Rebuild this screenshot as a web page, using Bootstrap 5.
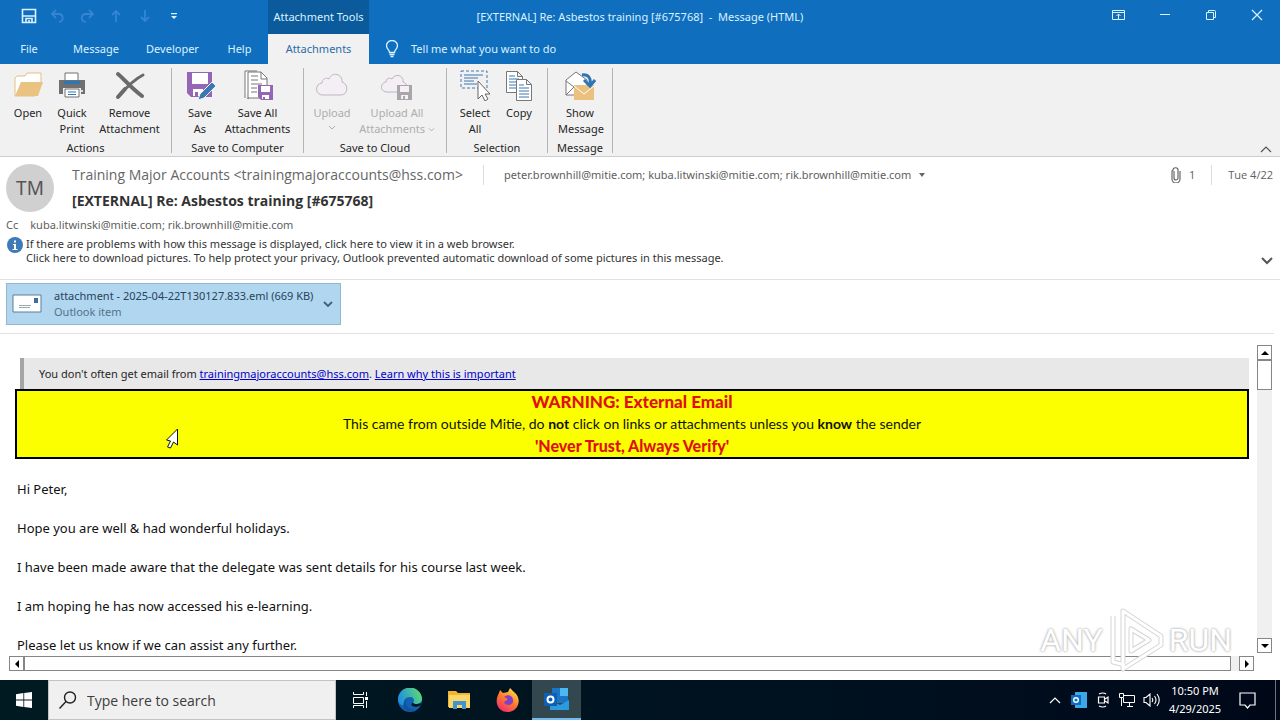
<!DOCTYPE html>
<html lang="en">
<head>
<meta charset="utf-8">
<meta name="viewport" content="width=device-width, initial-scale=1">
<title>[EXTERNAL] Re: Asbestos training [#675768] - Message (HTML)</title>
<link href="https://cdn.jsdelivr.net/npm/bootstrap@5.3.0/dist/css/bootstrap.min.css" rel="stylesheet">
<style>
:root { --ui: "Noto Sans", "Open Sans", sans-serif; --blue: #106ebe; }
body { font-family: var(--ui); font-size: 12px; line-height: 16px; color: #262626; background: #fff; }
button { font: inherit; color: inherit; background: none; border: 0; padding: 0; }
svg { display: block; flex: none; }
.f11 { font-size: 11px; }

.titlebar { height: 34px; background: var(--blue); color: #d9f3ff; }
.side { flex: 1 1 0; }
.window-title { white-space: pre; }
.qat { width: 268px; padding-left: 14px; }
.qat button { width: 29px; height: 32px; }
.qat button:disabled { color: #3585d2; }
.tools-head { width: 101px; background: #0b5a9c; }
.win-btn { width: 46px; height: 30px; }
.ribbon-tabs { background: var(--blue); color: #d9f3ff; display: grid; grid-template-columns: 58px 76px 77px 57px 101px 1fr; height: 30px; }
.ribbon-tabs .current { background: #f1f1f1; color: #2a6ca8; }

.ribbon { background: #f1f1f1; border-bottom: 1px solid #cdcdcd; padding: 4px 8px 3px 0; }
.rgroup { border-right: 1px solid #b5b5b5; padding: 0 6px; height: 85px; }
.rbtn { width: 44px; line-height: 16px; text-align: center; white-space: nowrap; }
.rbtn svg { margin: 1px auto 4px; }
.rbtn.wide { width: 71px; }
.rbtn.wider { width: 86px; }
.rbtn:disabled { color: #adadad; }
.rlabel { line-height: 10px; text-align: center; }

.msg-head { padding: 7px 7px 0 6px; color: #606060; height: 123px; border-bottom: 1px solid #e1e1e1; }
.avatar { width: 48px; height: 48px; background: #d0d0d0; border-radius: 50%; font-size: 19px; color: #555; }
.lines { margin-left: 18px; font-family: "Open Sans", sans-serif; }
.sender { font-size: 14px; line-height: 22px; color: #666; }
.subject { font-size: 14px; line-height: 22px; color: #333; margin: 4px 0 0; }
.recipients { font-family: var(--ui); }
.vline { width: 1px; height: 20px; background: #dcdcdc; }
.vline.gap-x { margin: 0 20px; }
.copied { margin-top: 5px; }
.infobar { line-height: 14px; color: #333; }
.infotext { margin-left: 2px; }

.attach-row { padding: 3px 6px 8px; border-bottom: 1px solid #e1e1e1; margin-right: 6px; }
.attachment { width: 335px; height: 42px; background: #b1d6f0; border: 1px solid #98b6c9; padding: 0 7px 0 5px; text-align: left; color: #28445a; }
.attachment .kind { color: #54738a; }

.pane { display: grid; grid-template-columns: minmax(0, 1fr) 15px; grid-template-rows: minmax(0, 1fr) 15px; column-gap: 8px; row-gap: 3px; padding: 11px 8px 9px 9px; min-height: 0; }
.mail { overflow: hidden; padding: 13px 0 0 6px; }
.notice { background: #e8e8e8; border-left: 4px solid #a5a5a5; margin-left: 5px; padding: 0 15px; line-height: 31px; }
.notice a { color: #0000d0; }
.warning { background: #fbff00; border: 2px solid #000; font-family: Lato, sans-serif; font-size: 14px; line-height: 22px; text-align: center; color: #111; margin-bottom: 21px; }
.warning .alert-line { color: #e01010; font-weight: 900; font-size: 16px; }
.warning .big { font-size: 17px; }
.mail p { font-size: 13px; line-height: 19px; margin: 0 0 20px 2px; color: #111; }
.sb-btn { width: 15px; height: 15px; border: 1px solid #868686; background: #fff; display: flex; align-items: center; justify-content: center; }
.sb-thumb { border: 1px solid #868686; background: #fff; }
.track { background: #f0f0f0; }
.track.across { margin-right: -5px; }

.taskbar { height: 40px; background: linear-gradient(90deg, #001a22, #00101f 70%, #000818); color: #fff; }
.search { width: 288px; background: #f0f0f0; border: 1px solid #c3c3c3; padding: 0 10px; }
.search input { border: 0; background: none; outline: 0; font-family: "Open Sans", sans-serif; font-size: 14px; line-height: 24px; height: 28px; flex: 1; min-width: 0; padding: 0; margin-left: 2px; }
.search input::placeholder { color: #3c3c3c; opacity: 1; }
.task { width: 49px; height: 40px; display: flex; align-items: center; justify-content: center; }
.task.start { width: 48px; }
.task.running { background: #33474f; border-bottom: 2px solid #76b9ed; }
.tray { width: 24px; height: 40px; display: flex; align-items: center; justify-content: center; }
.tray.notify { width: 40px; }
.clock { width: 64px; line-height: 18px; text-align: center; }

.watermark { position: absolute; right: 48px; bottom: 48px; pointer-events: none; font-family: Roboto, sans-serif; font-size: 32px; line-height: 64px; color: #fff; text-shadow: 0 0 3px #aaa, 0 0 2px #c4c4c4; }
.pointer { position: absolute; left: 165px; top: 428px; pointer-events: none; }
</style>
</head>
<body>
<div class="vh-100 d-flex flex-column position-relative overflow-hidden">

  <header class="titlebar d-flex flex-shrink-0">
    <div class="side d-flex">
      <div class="qat d-flex">
        <button aria-label="Save"><svg class="mx-auto" width="16" height="16" viewBox="0 0 16 16" fill="none" stroke="currentColor" stroke-width="1.600"><path d="M1.500 1.500h13v13h-13zM2 8h12M5 14.500v-4h6v4M8 12v2"/></svg></button>
        <button aria-label="Undo" disabled><svg class="mx-auto" width="16" height="16" viewBox="0 0 16 16" fill="none" stroke="currentColor" stroke-width="1.800"><path d="M6 2 2 6l4 4M2 6h7.500a4 4 0 0 1 1 7.500L9 14"/></svg></button>
        <button aria-label="Redo" disabled><svg class="mx-auto" width="16" height="16" viewBox="0 0 16 16" fill="none" stroke="currentColor" stroke-width="1.800"><path d="m10 2 4 4-4 4M14 6H6a4 4 0 0 0-1 7.500L7 14"/></svg></button>
        <button aria-label="Previous" disabled><svg class="mx-auto" width="16" height="16" viewBox="0 0 16 16" fill="none" stroke="currentColor" stroke-width="1.800"><path d="M8 14V3M4 7l4-4 4 4"/></svg></button>
        <button aria-label="Next" disabled><svg class="mx-auto" width="16" height="16" viewBox="0 0 16 16" fill="none" stroke="currentColor" stroke-width="1.800"><path d="M8 2v11M4 9l4 4 4-4"/></svg></button>
        <button aria-label="Customize toolbar"><svg class="mx-auto" width="8" height="8" viewBox="0 0 8 8" fill="currentColor"><path d="M1 1h6v1.200H1zM1 4h6L4 7z"/></svg></button>
      </div>
      <div class="tools-head d-flex align-items-center justify-content-center text-nowrap f11">Attachment Tools</div>
    </div>
    <div class="window-title align-self-center f11">[EXTERNAL] Re: Asbestos training [#675768]  -  Message (HTML)</div>
    <div class="side d-flex justify-content-end">
      <button class="win-btn" aria-label="Ribbon options"><svg class="mx-auto" width="14" height="12" viewBox="0 0 14 12" fill="none" stroke="currentColor"><path d="M.5 1.500h12v9H.5zM.5 3.500h12M6.500 10V5M4.500 7l2-2 2 2"/></svg></button>
      <button class="win-btn" aria-label="Minimize"><svg class="mx-auto" width="12" height="12" viewBox="0 0 12 12" stroke="currentColor"><path d="M1 5.500h10"/></svg></button>
      <button class="win-btn" aria-label="Restore"><svg class="mx-auto" width="12" height="12" viewBox="0 0 12 12" fill="none" stroke="currentColor"><path d="M1.500 3.500h7v7h-7zM3.500 3V1.500h6a1 1 0 0 1 1 1v6H9"/></svg></button>
      <button class="win-btn" aria-label="Close"><svg class="mx-auto" width="12" height="12" viewBox="0 0 12 12" stroke="currentColor" stroke-width="1.200"><path d="m1 1 10 10M11 1 1 11"/></svg></button>
    </div>
  </header>

  <nav class="ribbon-tabs f11 flex-shrink-0" aria-label="Ribbon tabs">
    <button>File</button><button>Message</button><button>Developer</button><button>Help</button><button class="current">Attachments</button>
    <button class="d-flex align-items-center ps-3"><svg class="me-2" width="14" height="18" viewBox="0 0 14 18" fill="none" stroke="currentColor" stroke-width="1.300"><path d="M4.500 12.500c0-3-3-3.500-3-7a5.500 5 0 0 1 11 0c0 3.500-3 4-3 7zM4.500 14.500h5M5.500 16.500h3"/></svg><span class="ps-1">Tell me what you want to do</span></button>
  </nav>

  <section class="ribbon d-flex f11 flex-shrink-0" aria-label="Attachments ribbon">
    <div class="rgroup d-flex flex-column justify-content-between">
      <div class="d-flex align-items-start">
        <button class="rbtn"><svg width="32" height="32" viewBox="0 0 32 32"><path d="M3 27V9l2-2h8l2-3h14v10l-6 13z" fill="#fff" stroke="#e5bf83"/><path d="M3 27 9 13h22l-5 14z" fill="#eac282"/></svg>Open</button>
        <button class="rbtn"><svg width="32" height="32" viewBox="0 0 32 32"><path d="M9 11V4h13v7" fill="#fff" stroke="#707070"/><path d="M3 11h26v14h-4v-6H7v6H3z" fill="#707070"/><path d="M8 12h16v3H8z" fill="#2e75b6"/><path d="M9 20h14v8H9z" fill="#fff" stroke="#707070"/><path d="M12 23h8M12 25.500h8" stroke="#2e75b6"/><circle cx="26" cy="22" r="1" fill="#fff"/></svg>Quick<br>Print</button>
        <button class="rbtn wide"><svg width="32" height="32" viewBox="0 0 32 32" fill="none" stroke="#6a6a6a" stroke-linecap="round"><path d="M4 5c6 5 13 14 24 22" stroke-width="4"/><path d="M5 27C11 20 19 11 29 6" stroke-width="3"/><path d="m4 28 7-8" stroke-width="4"/></svg>Remove<br>Attachment</button>
      </div>
      <div class="rlabel">Actions</div>
    </div>
    <div class="rgroup d-flex flex-column justify-content-between">
      <div class="d-flex align-items-start ps-px">
        <button class="rbtn ms-px"><svg width="32" height="32" viewBox="0 0 32 32"><path d="M3 3h25v25H7l-4-4z" fill="#9566b4"/><path d="M8 4h16v11H8zM9 20h10v7H9z" fill="#fff"/><path d="M11 23h3v5h-3z" fill="#9566b4"/><path d="m14 31 2-6 12-12 4 4-12 12z" fill="#3c78b4" stroke="#f1f1f1"/></svg>Save<br>As</button>
        <button class="rbtn wide me-1"><svg width="32" height="32" viewBox="0 0 32 32"><path d="M3 29V2h12M6 30V3h13l6 6v20H6z" fill="#fff" stroke="#777"/><path d="M19 3v7h6M9 7h7M9 11h7M9 15h11M9 19h6M9 23h6" fill="none" stroke="#777"/><path d="M16 16h15v15H19l-3-3z" fill="#9566b4"/><path d="M19 17h9v6h-9zM20 26h7v4h-7z" fill="#fff"/><path d="M21 28h2v3h-2z" fill="#9566b4"/></svg>Save All<br>Attachments</button>
      </div>
      <div class="rlabel">Save to Computer</div>
    </div>
    <div class="rgroup d-flex flex-column justify-content-between">
      <div class="d-flex align-items-start">
        <button class="rbtn" disabled><svg width="32" height="32" viewBox="0 0 32 32"><path d="M7 26a6 6 0 0 1-1-12c0-4 4-6 7-4 3-8 14-5 13 3 7 2 6 13-1 13z" fill="#f4eef5" stroke="#bdb7bd"/></svg>Upload<svg class="mt-1" width="8" height="6" viewBox="0 0 8 6" fill="none" stroke="currentColor"><path d="m1 1 3 3 3-3"/></svg></button>
        <button class="rbtn wider" disabled><svg width="32" height="32" viewBox="0 0 32 32"><path d="M6 23a5 5 0 0 1-1-10c0-3 3-5 6-3 3-6 12-4 11 3 5 1 6 10 0 10z" fill="#f4eef5" stroke="#bdb7bd"/><path d="M16 16h15v15H16z" fill="#aaa5aa"/><path d="M19 17h9v6h-9zM20 26h7v4h-7z" fill="#f4f0f4"/><path d="M22 27h2v4h-2z" fill="#aaa5aa"/></svg>Upload All<br>Attachments <svg class="d-inline-block m-0" width="7" height="6" viewBox="0 0 8 6" fill="none" stroke="currentColor"><path d="m1 1 3 3 3-3"/></svg></button>
      </div>
      <div class="rlabel">Save to Cloud</div>
    </div>
    <div class="rgroup d-flex flex-column justify-content-between">
      <div class="d-flex align-items-start">
        <button class="rbtn"><svg width="32" height="32" viewBox="0 0 32 32" fill="none"><path d="M2 2h26v17H2z" stroke="#3c78b4" stroke-dasharray="3 2"/><path d="M5 6h19M5 9h14M5 12h10M5 15h13" stroke="#3c78b4"/><path d="M19 12v18l4-4 3 6 3-2-3-5h5z" fill="#fff" stroke="#666"/></svg>Select<br>All</button>
        <button class="rbtn"><svg width="32" height="32" viewBox="0 0 32 32" fill="#fff" stroke="#777"><path d="M3.500 2.500h11l5 5v16h-16zM14.500 2.500v5h5"/><path d="M6 7h6M6 10h10M6 13h7M6 16h7M6 19h7" stroke="#3c78b4"/><path d="M13.500 10.500h10l5 5v16h-15zM23.500 10.500v5h5"/><path d="M16 16h5M16 19h10M16 22h10M16 25h10M16 28h10" stroke="#3c78b4"/></svg>Copy</button>
      </div>
      <div class="rlabel">Selection</div>
    </div>
    <div class="rgroup d-flex flex-column justify-content-between">
      <div class="d-flex align-items-start justify-content-center">
        <button class="rbtn mx-1"><svg width="32" height="32" viewBox="0 0 32 32"><path d="M2 26V11l10-8 11 8v15z" fill="#fff" stroke="#777"/><path d="m2 12 8 6M2 26l8-8" stroke="#777"/><path d="M10 16h20v15H10z" fill="#ecc17f"/><path d="m10 17 10 8 10-8" fill="none" stroke="#fff"/><path d="M18 6c7-1 9 4 8 9M20 11l6 6 5-6" fill="none" stroke="#2e75b6" stroke-width="3"/></svg>Show<br>Message</button>
      </div>
      <div class="rlabel">Message</div>
    </div>
    <button class="ms-auto align-self-end" aria-label="Collapse ribbon"><svg width="12" height="7" viewBox="0 0 12 7" fill="none" stroke="#555" stroke-width="1.200"><path d="m1 6 5-5 5 5"/></svg></button>
  </section>

  <section class="msg-head flex-shrink-0">
    <div class="d-flex">
      <div class="avatar d-flex align-items-center justify-content-center flex-shrink-0">TM</div>
      <div class="lines flex-grow-1">
        <div class="d-flex align-items-center">
          <span class="sender text-nowrap">Training Major Accounts &lt;trainingmajoraccounts@hss.com&gt;</span>
          <span class="vline gap-x"></span>
          <span class="recipients text-nowrap f11">peter.brownhill@mitie.com; kuba.litwinski@mitie.com; rik.brownhill@mitie.com</span>
          <svg class="ms-2" width="6" height="4" viewBox="0 0 6 4"><path d="M0 0h6L3 4z" fill="#666"/></svg>
          <svg class="ms-auto" width="10" height="16" viewBox="0 0 10 16" fill="none" stroke="#666" stroke-width="1.200"><path d="M3 4v7a2 2 0 0 0 4 0V3.500a2.500 2.500 0 0 0-5-.5L1 4v8a4 4 0 0 0 8 0V4"/></svg>
          <span class="ms-2 f11">1</span>
          <span class="vline mx-3"></span>
          <span class="text-nowrap f11">Tue 4/22</span>
        </div>
        <h1 class="subject fw-bold">[EXTERNAL] Re: Asbestos training [#675768]</h1>
      </div>
    </div>
    <div class="d-flex f11 copied"><span>Cc</span><span class="ms-2 ps-1">kuba.litwinski@mitie.com; rik.brownhill@mitie.com</span></div>
    <div class="d-flex infobar mt-1 f11">
      <svg width="18" height="18" viewBox="0 0 18 18"><circle cx="9" cy="8" r="8" fill="#3d7ab8"/><path d="M8 3.500h2v2H8zM7 7h3v5h1.500v1h-5v-1H8V8H7z" fill="#fff"/></svg>
      <div class="infotext">If there are problems with how this message is displayed, click here to view it in a web browser.<br>Click here to download pictures. To help protect your privacy, Outlook prevented automatic download of some pictures in this message.</div>
      <button class="ms-auto align-self-end" aria-label="Expand header"><svg width="12" height="8" viewBox="0 0 12 8" fill="none" stroke="#555" stroke-width="2"><path d="m1 1 5 5 5-5"/></svg></button>
    </div>
  </section>

  <section class="attach-row flex-shrink-0">
    <button class="attachment d-flex align-items-center f11">
      <svg width="30" height="20" viewBox="0 0 30 20"><path d="M1 1h28v17H1z" fill="#fff" stroke="#5c7f99"/><path d="M22 4h4v5h-4z" fill="#3a6f9f"/><path d="M7 11.500h12M7 13.500h11" stroke="#9aa"/></svg>
      <span class="ms-2 ps-1 text-nowrap">attachment - 2025-04-22T130127.833.eml (669 KB)<br><span class="kind">Outlook item</span></span>
      <svg class="ms-auto" width="10" height="7" viewBox="0 0 10 7" fill="none" stroke="#3f617b" stroke-width="1.800"><path d="m1 1 4 4 4-4"/></svg>
    </button>
  </section>

  <main class="pane flex-grow-1">
    <article class="mail">
      <div class="notice f11">You don't often get email from <a href="#">trainingmajoraccounts@hss.com</a>. <a href="#">Learn why this is important</a></div>
      <div class="warning">
        <div class="alert-line big">WARNING: External Email</div>
        <div>This came from outside Mitie, do <b>not</b> click on links or attachments unless you <b>know</b> the sender</div>
        <div class="alert-line">'Never Trust, Always Verify'</div>
      </div>
      <p>Hi Peter,</p>
      <p>Hope you are well &amp; had wonderful holidays.</p>
      <p>I have been made aware that the delegate was sent details for his course last week.</p>
      <p>I am hoping he has now accessed his e-learning.</p>
      <p>Please let us know if we can assist any further.</p>
    </article>
    <div class="track d-flex flex-column">
      <button class="sb-btn" aria-label="Scroll up"><svg width="8" height="4"><path d="M0 4h8L4 0z"/></svg></button>
      <div class="sb-thumb" style="height:30px"></div>
      <button class="sb-btn mt-auto" aria-label="Scroll down"><svg width="8" height="4"><path d="M0 0h8L4 4z"/></svg></button>
    </div>
    <div class="track across d-flex">
      <button class="sb-btn" aria-label="Scroll left"><svg width="4" height="8"><path d="M4 0v8L0 4z"/></svg></button>
      <div class="sb-thumb flex-grow-1 me-2"></div>
      <button class="sb-btn" aria-label="Scroll right"><svg width="4" height="8"><path d="M0 0v8l4-4z"/></svg></button>
    </div>
  </main>

  <footer class="taskbar d-flex flex-shrink-0">
    <button class="task start" aria-label="Start"><svg width="16" height="16" viewBox="0 0 16 16" fill="#fff"><path d="M0 2.200 7.400 1v6.600H0zM8.200.9 16 0v7.600H8.200zM0 8.400h7.400V15L0 13.800zM8.200 8.400H16V16l-7.800-1.100z"/></svg></button>
    <label class="search d-flex align-items-center"><svg class="me-2" width="18" height="18" viewBox="0 0 18 18" fill="none" stroke="#222" stroke-width="1.400"><circle cx="11" cy="6.500" r="5.500"/><path d="m7 10.500-6.500 7"/></svg><input type="text" aria-label="Search" placeholder="Type here to search"></label>
    <button class="task" aria-label="Task view"><svg width="17" height="16" viewBox="0 0 17 16" fill="none" stroke="#fff"><path d="M1.500 0v2.500h10V0M1.500 5.500h10v6h-10zM1.500 16v-2.500h10V16M14.500 0v4M14.500 9v7"/><path d="M13 5h3v3h-3z" fill="#fff" stroke="none"/></svg></button>
    <button class="task" aria-label="Edge"><svg width="24" height="24" viewBox="0 0 24 24"><defs><linearGradient id="eg" x1="0" x2="1" y1=".5" y2=".2"><stop offset="0" stop-color="#1f8fe0"/><stop offset="1" stop-color="#5fdc70"/></linearGradient></defs><circle cx="12" cy="12" r="12" fill="#0f62b4"/><path d="M0 12a12 12 0 0 1 24-1c0 5-7 6-9 4 2-2 1-6-3-6-5 0-7 4-6 9C3 17 0 15 0 12" fill="url(#eg)"/><path d="M14.500 14.500c2 2 6 2 8 .500l.500 2c-4 3-10 2-9.500-1z" fill="#001820"/><path d="M9 11c-4 6 2 11 8 11-8 5-17-4-8-11" fill="#1a4f9c"/></svg></button>
    <button class="task" aria-label="File Explorer"><svg width="22" height="20" viewBox="0 0 22 20"><path d="M0 1h8l2 2h12v14H0z" fill="#f1b62f"/><path d="M1 5h21v13H1z" fill="#fbd669"/><path d="M5 11h13v8h-4v-4H9v4H5z" fill="#3f94d1"/></svg></button>
    <button class="task" aria-label="Firefox"><svg width="24" height="24" viewBox="0 0 24 24"><defs><linearGradient id="fx" x1=".8" x2=".2" y1="0" y2="1"><stop offset="0" stop-color="#ffe14a"/><stop offset=".5" stop-color="#ff7a2a"/><stop offset="1" stop-color="#f0277a"/></linearGradient></defs><path d="M3 5l1-3 3 3 5-1 2-4c2 2 3 3 4 4 9 7 4 20-6 20C1 24-2 13 3 5" fill="url(#fx)"/><path d="M8 9c5-4 10 0 9 5-1 4-8 4-9 0l3-2c2-1-1-2-3-3" fill="#8140c8"/></svg></button>
    <button class="task running" aria-label="Outlook"><svg width="26" height="24" viewBox="0 0 26 24"><path d="M8 1h16v15H8z" fill="#1b74c4"/><path d="M16 1h8v8h-8z" fill="#4bb8f0"/><path d="m6 13 10 5 9-5v10H6z" fill="#2a9be0"/><path d="M0 6h13v13H0z" fill="#0d5fb5"/><circle cx="6.500" cy="12.500" r="3" fill="none" stroke="#fff" stroke-width="2"/></svg></button>
    <div class="ms-auto d-flex align-items-center">
      <button class="tray" aria-label="Show hidden icons"><svg width="12" height="8" viewBox="0 0 12 8" fill="none" stroke="#fff" stroke-width="1.200"><path d="m1 7 5-5 5 5"/></svg></button>
      <button class="tray" aria-label="Outlook"><svg width="16" height="16" viewBox="0 0 16 16"><path d="M4 0h12v16H4z" fill="#39a7e8"/><path d="M0 3h10v10H0z" fill="#0d6cc0"/><circle cx="5" cy="8" r="2.300" fill="none" stroke="#fff" stroke-width="1.400"/></svg></button>
      <button class="tray" aria-label="Meet now"><svg width="14" height="16" viewBox="0 0 14 16" fill="none" stroke="#fff" stroke-width="1.200"><path d="M2.500 5h6v6h-6zM9 7l3-2v6L9 9M3 2q4-2 7 0M3 14q4 2 7 0"/></svg></button>
      <button class="tray" aria-label="Network"><svg width="16" height="14" viewBox="0 0 16 14" fill="none" stroke="#fff"><path d="M5 2.500h10.500v7h-11V5M.5.5h4v4h-4zM2.500 4v9M8 13.500h6M10.500 10v3"/></svg></button>
      <button class="tray" aria-label="Volume"><svg width="17" height="14" viewBox="0 0 17 14" fill="none" stroke="#fff" stroke-width="1.100"><path d="M1 4.500h2l4-3.500v12L3 9.500H1zM9 5q1.500 2 0 4M11.500 3q3 4 0 8M14 1q4.500 6 0 12"/></svg></button>
      <div class="clock f11">10:50 PM<br>4/29/2025</div>
      <button class="tray notify me-2" aria-label="Notifications"><svg width="17" height="17" viewBox="0 0 17 17" fill="none" stroke="#fff" stroke-width="1.200"><path d="M1 1h15v12h-5l-2.500 3L6 13H1z"/></svg></button>
      <div class="align-self-stretch border-start border-secondary ps-1"></div>
    </div>
  </footer>

  <div class="watermark d-flex align-items-center" aria-hidden="true">ANY<svg class="mx-1" width="58" height="64" viewBox="0 0 58 64" fill="none" stroke-linejoin="round"><path d="M6 8v46l12 3M16 3l38 25v9L16 61zM24 21v22l18-11z" stroke="#d5d5d5" stroke-width="5"/><path d="M6 8v46l12 3M16 3l38 25v9L16 61zM24 21v22l18-11z" stroke="#fff" stroke-width="3"/></svg>RUN</div>
  <svg class="pointer" width="15" height="22" viewBox="0 0 15 22"><path d="M12.500 1v16l-4-3-3 6-3-1 3-6-4-1z" fill="#fff" stroke="#111"/></svg>
</div>
<script src="https://cdn.jsdelivr.net/npm/bootstrap@5.3.0/dist/js/bootstrap.bundle.min.js"></script>
</body>
</html>
